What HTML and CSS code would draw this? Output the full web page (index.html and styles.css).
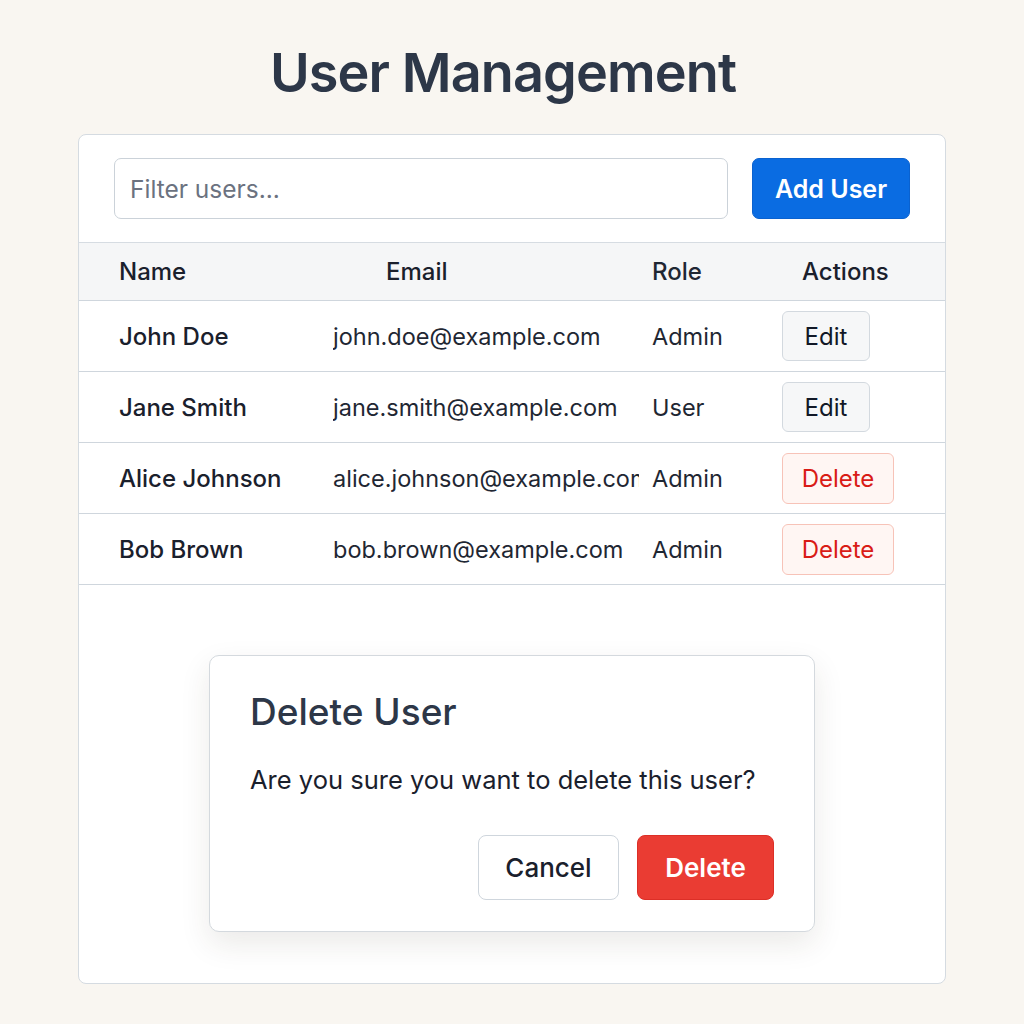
FILE: index.html
```html
<!DOCTYPE html>
<html lang="en">
<head>
<meta charset="utf-8">
<title>User Management</title>
<link rel="stylesheet" href="styles.css">
</head>
<body>
<main class="page">
  <h1 class="title">User Management</h1>
  <section class="card">
    <div class="toolbar">
      <input class="filter" type="text" placeholder="Filter users...">
      <button class="btn btn-primary">Add User</button>
    </div>
    <div class="table">
      <div class="row head">
        <div class="cell c-name">Name</div>
        <div class="cell c-email h-email">Email</div>
        <div class="cell c-role">Role</div>
        <div class="cell c-act h-act">Actions</div>
      </div>
      <div class="row">
        <div class="cell c-name strong">John Doe</div>
        <div class="cell c-email">john.doe@example.com</div>
        <div class="cell c-role">Admin</div>
        <div class="cell c-act"><button class="btn btn-edit">Edit</button></div>
      </div>
      <div class="row">
        <div class="cell c-name strong">Jane Smith</div>
        <div class="cell c-email">jane.smith@example.com</div>
        <div class="cell c-role">User</div>
        <div class="cell c-act"><button class="btn btn-edit">Edit</button></div>
      </div>
      <div class="row">
        <div class="cell c-name strong">Alice Johnson</div>
        <div class="cell c-email">alice.johnson@example.com</div>
        <div class="cell c-role">Admin</div>
        <div class="cell c-act"><button class="btn btn-del">Delete</button></div>
      </div>
      <div class="row">
        <div class="cell c-name strong">Bob Brown</div>
        <div class="cell c-email">bob.brown@example.com</div>
        <div class="cell c-role">Admin</div>
        <div class="cell c-act"><button class="btn btn-del">Delete</button></div>
      </div>
    </div>
    <div class="dialog">
      <h2 class="dialog-title">Delete User</h2>
      <p class="dialog-msg">Are you sure you want to delete this user?</p>
      <div class="dialog-actions">
        <button class="btn btn-cancel">Cancel</button>
        <button class="btn btn-danger">Delete</button>
      </div>
    </div>
  </section>
</main>
</body>
</html>
```

FILE: styles.css
```css
* { box-sizing: border-box; }
html, body { margin: 0; padding: 0; }
body {
  background: #f9f6f1;
  font-family: Inter, "Noto Sans", sans-serif;
  color: #1a202c;
  width: 1024px;
  height: 1024px;
  overflow: hidden;
}
.page {
  display: flex;
  flex-direction: column;
  align-items: center;
  padding-top: 42px;
}
.title {
  margin: 0 18px 0 0;
  font-size: 54px;
  font-weight: 600;
  line-height: 62px;
  color: #2d3748;
  letter-spacing: -0.9px;
}
.card {
  margin-top: 30px;
  width: 868px;
  height: 850px;
  background: #fff;
  border: 1px solid #d5dbe1;
  border-radius: 8px;
  display: flex;
  flex-direction: column;
}
.toolbar {
  display: flex;
  align-items: center;
  gap: 24px;
  padding: 23px 35px 23px 35px;
}
.filter {
  flex: 0 0 614px;
  height: 61px;
  border: 1px solid #cbd2d9;
  border-radius: 7px;
  padding: 0 15px;
  font-family: inherit;
  font-size: 24.5px;
  color: #1a202c;
  background: #fff;
  outline: none;
}
.filter::placeholder { color: #6b7280; }
.btn {
  font-family: inherit;
  cursor: pointer;
  display: inline-flex;
  align-items: center;
  justify-content: center;
  padding: 0;
}
.btn-primary {
  width: 158px;
  height: 61px;
  background: #0a6ce2;
  color: #fff;
  border: 1px solid #0a62d0;
  border-radius: 7px;
  font-size: 25px;
  font-weight: 600;
}
.table {
  border-top: 1px solid #d6dce2;
}
.row {
  display: grid;
  grid-template-columns: 254px 306px 143px 1fr;
  align-items: center;
  height: 71px;
  border-bottom: 1px solid #cfd6dd;
  font-size: 23.5px;
}
.row.head {
  height: 58px;
  background: #f5f6f7;
  font-weight: 500;
  font-size: 24px;
}
.cell {
  white-space: nowrap;
  overflow: hidden;
}
.c-name { padding-left: 40px; }
.c-email { color: #1f2733; }
.h-email { padding-left: 53px; color: #1a202c; }
.c-role { color: #1f2733; padding-left: 13px; }
.h-act { padding-left: 20px; }
.strong { font-weight: 500; color: #1a202c; font-size: 24px; }
.btn-edit {
  width: 88px;
  height: 50px;
  background: #f6f7f8;
  border: 1px solid #d3d9df;
  border-radius: 6px;
  font-size: 24px;
  color: #111827;
}
.btn-del {
  width: 112px;
  height: 51px;
  background: #fff6f3;
  border: 1px solid #f7c3b8;
  border-radius: 6px;
  font-size: 24px;
  color: #d91c16;
}
.dialog {
  margin: 70px auto 0;
  width: 606px;
  height: 277px;
  background: #fff;
  border: 1px solid #d4d9de;
  border-radius: 10px;
  box-shadow: 0 12px 30px rgba(60, 50, 30, 0.10);
  padding: 30px 40px 0 40px;
  display: flex;
  flex-direction: column;
}
.dialog-title {
  margin: 0;
  font-size: 37px;
  font-weight: 500;
  line-height: 52px;
  color: #2d3748;
}
.dialog-msg {
  margin: 27px 0 0;
  font-size: 25.5px;
  line-height: 30px;
  color: #1a202c;
}
.dialog-actions {
  display: flex;
  justify-content: flex-end;
  gap: 18px;
  margin-top: 40px;
}
.btn-cancel {
  width: 141px;
  height: 65px;
  background: #fff;
  border: 1px solid #cfd6dd;
  border-radius: 8px;
  font-size: 26px;
  font-weight: 500;
  color: #1a202c;
}
.btn-danger {
  width: 137px;
  height: 65px;
  background: #ea3c33;
  border: 1px solid #dc2f27;
  border-radius: 8px;
  font-size: 26px;
  font-weight: 600;
  color: #fff;
}
```
